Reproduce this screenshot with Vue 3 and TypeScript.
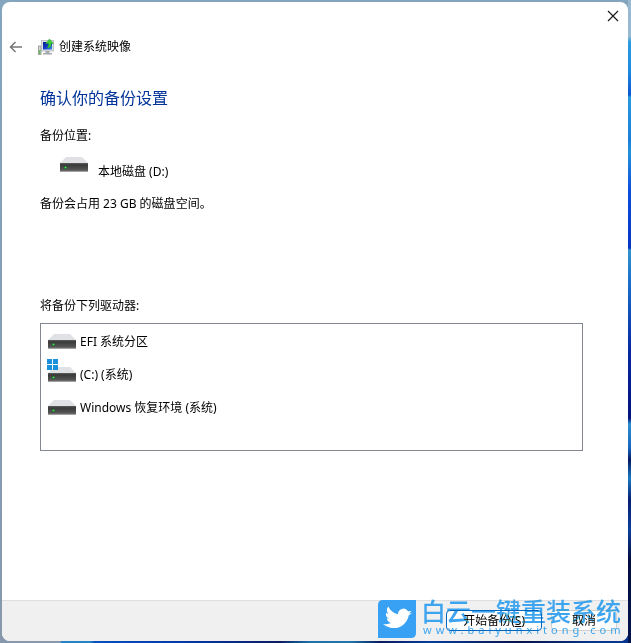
<script setup lang="ts">
interface Drive {
  name: string
  system: boolean
}

const drives: Drive[] = [
  { name: 'EFI 系统分区', system: false },
  { name: '(C:) (系统)', system: true },
  { name: 'Windows 恢复环境 (系统)', system: false },
]
</script>

<template>
  <div class="desktop">
    <svg width="0" height="0" class="defs" aria-hidden="true">
      <defs>
        <linearGradient id="drive-front" x1="0" y1="0" x2="0" y2="1">
          <stop offset="0" stop-color="#606060" />
          <stop offset="0.2" stop-color="#393939" />
          <stop offset="0.75" stop-color="#555555" />
          <stop offset="1" stop-color="#868686" />
        </linearGradient>
        <linearGradient id="screen" x1="0" y1="0" x2="1" y2="1">
          <stop offset="0" stop-color="#071b8c" />
          <stop offset="0.5" stop-color="#1238c8" />
          <stop offset="1" stop-color="#3c8ee8" />
        </linearGradient>
        <symbol id="drive" viewBox="0 0 28 15">
          <path d="M6 0h16l6 6H0z" fill="#dfe1e4" />
          <rect y="6" width="28" height="9" fill="url(#drive-front)" />
          <rect y="14" width="28" height="1" fill="#a0a0a0" />
          <circle cx="5.5" cy="10.5" r="1.6" fill="#1d7a2c" />
          <circle cx="5.5" cy="10.5" r="0.8" fill="#4bea5c" />
        </symbol>
      </defs>
    </svg>
    <main class="window">
      <div class="titlebar">
        <button class="close" type="button" aria-label="关闭">
          <svg width="12" height="12" viewBox="0 0 12 12">
            <path d="M1 1l10 10M11 1L1 11" stroke="#1a1a1a" stroke-width="1.2" />
          </svg>
        </button>
      </div>
      <header class="header">
        <button class="back" type="button" aria-label="返回">
          <svg width="14" height="12" viewBox="0 0 14 12" fill="none">
            <path d="M6.5 1L1.5 6l5 5M1.5 6H13" stroke="#757575" stroke-width="1.5" />
          </svg>
        </button>
        <svg class="app-icon" width="16" height="16" viewBox="0 0 16 16">
          <rect x="0.5" y="7" width="2.5" height="8.500" fill="#d5dad5" stroke="#8b938b" stroke-width="0.8" />
          <rect x="1" y="11" width="1.500" height="4" fill="#6fb45c" />
          <rect x="3.500" y="1.500" width="12" height="10.500" fill="#dfe2e5" stroke="#b1b7bd" stroke-width="0.8" />
          <rect x="5" y="3" width="9" height="7.500" fill="url(#screen)" />
          <path d="M7.500 12h4v2h2.500v1.500H5V14h2.500z" fill="#a5a9ad" />
          <path d="M9 8.500c1.500-.5 1.700-2 1.500-4H7.500L11.500 0l4 4.500H13c.3 3-1 5-4 4z" fill="#3fcf38" stroke="#1c9620" stroke-width="0.400" />
        </svg>
        <span>创建系统映像</span>
      </header>
      <section class="content">
        <h1>确认你的备份设置</h1>
        <p class="line">备份位置:</p>
        <div class="location">
          <svg width="28" height="15"><use href="#drive" /></svg>
          <span>本地磁盘 (D:)</span>
        </div>
        <p class="line size">备份会占用 23 GB 的磁盘空间。</p>
        <p id="drives-label" class="line">将备份下列驱动器:</p>
        <ul class="drives" aria-labelledby="drives-label">
          <li v-for="drive in drives" :key="drive.name">
            <span class="drive-icon">
              <svg width="28" height="15"><use href="#drive" /></svg>
              <svg v-if="drive.system" class="logo" width="11" height="11" viewBox="0 0 11 11">
                <path d="M0 0h5v5H0zM6 0h5v5H6zM0 6h5v5H0zM6 6h5v5H6z" fill="#1a91dc" />
              </svg>
            </span>
            <span>{{ drive.name }}</span>
          </li>
        </ul>
      </section>
      <footer class="footer">
        <button class="action primary" type="button">开始备份(<u>S</u>)</button>
        <button class="action cancel" type="button">取消</button>
      </footer>
    </main>
    <svg class="bird" width="38" height="38" viewBox="0 0 38 38">
      <path d="M5 0h33v33q0 5-5 5H0V5q0-5 5-5z" fill="#38a1f3" />
      <path
        transform="rotate(12 19 19) translate(6 5) scale(1.1)"
        d="M23.950 4.570a10 10 0 0 1-2.820.77 4.960 4.960 0 0 0 2.160-2.720c-.95.55-2 .95-3.130 1.180a4.920 4.920 0 0 0-8.380 4.480C7.690 8.100 4.070 6.130 1.640 3.160a4.920 4.920 0 0 0 1.520 6.570 4.900 4.900 0 0 1-2.230-.61v.06a4.920 4.920 0 0 0 3.950 4.830 5 5 0 0 1-2.210.08 4.940 4.940 0 0 0 4.600 3.420A9.870 9.870 0 0 1 0 19.540a13.990 13.990 0 0 0 7.550 2.210c9.050 0 14-7.500 14-13.980 0-.21 0-.42-.02-.63a9.940 9.940 0 0 0 2.420-2.570z"
        fill="#ffffff"
      />
    </svg>
    <div class="mark">
      <div class="mark-name">白云一键重装系统</div>
      <div class="mark-url">www.baiyunxitong.com</div>
    </div>
  </div>
</template>

<style>
body {
  margin: 0;
}
</style>

<style scoped>
.desktop {
  position: relative;
  box-sizing: border-box;
  display: flex;
  min-height: 100vh;
  padding: 2px 3px 2px 2px;
  overflow: hidden;
  font: 12px/16px "Noto Sans", "Noto Sans CJK SC", sans-serif;
  color: #000;
  background:
    linear-gradient(180deg, #9ab8cf 0 36px, #2d9be0 42px, #1e8be0 70px, #0b57d2 95px, #2a9adf 97px, #1b7fd8 140px, #2494da 152px, #0d4ede 190px, #0735c4 248px, #3194cc 250px, #1b72cc 280px, #0628a4 350px, #03127c 418px, #2c8fce 424px, #1766c0 448px, #041a62 460px, #1c7ac4 478px, #061f74 500px, #0c3f9c 530px, #030c40 560px, #04144c 100%) right / 3px 100% no-repeat,
    linear-gradient(90deg, #8798ac 0 60px, #2483c4 62px 90px, #0650be 95px, #0733a0 200px, #0a1d62 280px, #1f72a8 310px, #2376ac 350px, #081c60 380px, #0a3a9c 430px, #061448 520px, #0a3690 600px) bottom / 100% 8px no-repeat,
    linear-gradient(180deg, #83a5be, #8798ac);
}

.defs {
  position: absolute;
}

.window {
  flex: 1;
  display: flex;
  flex-direction: column;
  overflow: hidden;
  border-radius: 8px;
  background: #fff;
}

button {
  padding: 0;
  border: 0;
  background: none;
  font: inherit;
  color: inherit;
}

.titlebar {
  display: flex;
  justify-content: flex-end;
  padding: 8px 9px 0 0;
}

.close {
  display: flex;
}

.header {
  display: flex;
  align-items: center;
  padding: 17px 7px 0;
}

.back {
  display: flex;
  margin-right: 15px;
}

.app-icon {
  margin-right: 5px;
}

.content {
  flex: 1;
  padding: 31px 45px 24px 38px;
}

h1 {
  margin: 0 0 18px;
  font-size: 16px;
  line-height: 24px;
  font-weight: 400;
  color: #003399;
}

.line {
  margin: 0;
}

.location {
  display: flex;
  align-items: flex-end;
  gap: 10px;
  padding: 13px 0 0 20px;
}

.location svg {
  margin-bottom: 8px;
}

.location span {
  line-height: 16px;
}

.size {
  margin: 16px 0 86px;
}

.drives {
  margin: 9px 0 0;
  padding: 1px 6px 26px;
  border: 1px solid #828790;
  list-style: none;
}

.drives li {
  display: flex;
  align-items: center;
  gap: 4px;
  height: 33px;
}

.drive-icon {
  position: relative;
  display: flex;
  padding-left: 1px;
}

.logo {
  position: absolute;
  left: 0;
  top: -8px;
}

.footer {
  display: flex;
  justify-content: flex-end;
  gap: 9px;
  padding: 9px 11px 10px;
  border-top: 1px solid #dfdfdf;
  background: #f0f0f0;
}

.action {
  height: 21px;
  padding: 0 16px;
  border: 1px solid #d0d0d0;
  border-radius: 4px;
  background: #fdfdfd;
  line-height: 18px;
}

.primary {
  border-color: #0067c0;
}

.cancel {
  padding: 0 20px;
}

.bird {
  position: absolute;
  right: 215px;
  bottom: 5px;
}

.mark {
  position: absolute;
  right: 10px;
  bottom: 7px;
  width: 200px;
  color: #3da4f0;
  mix-blend-mode: darken;
  pointer-events: none;
}

.mark-name {
  font-size: 25px;
  font-weight: 500;
  line-height: 26px;
  white-space: nowrap;
}

.mark-url {
  padding-left: 2px;
  font-size: 11px;
  line-height: 12px;
  letter-spacing: 4px;
  white-space: nowrap;
}
</style>
